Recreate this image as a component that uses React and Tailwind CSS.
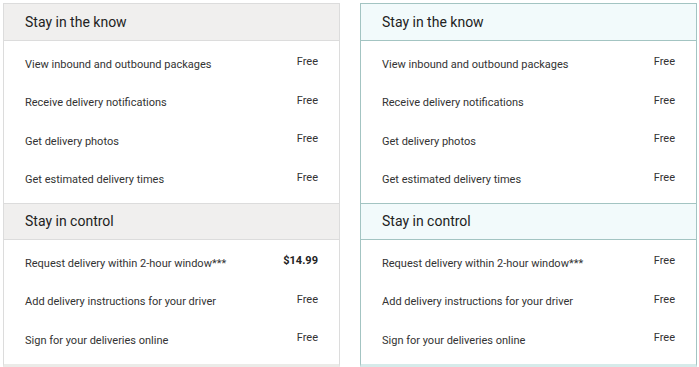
const sections = [
  {
    title: 'Stay in the know',
    rows: [
      ['View inbound and outbound packages', 'Free', 'Free'],
      ['Receive delivery notifications', 'Free', 'Free'],
      ['Get delivery photos', 'Free', 'Free'],
      ['Get estimated delivery times', 'Free', 'Free'],
    ],
  },
  {
    title: 'Stay in control',
    rows: [
      ['Request delivery within 2-hour window***', '$14.99', 'Free'],
      ['Add delivery instructions for your driver', 'Free', 'Free'],
      ['Sign for your deliveries online', 'Free', 'Free'],
    ],
  },
];

const Panel = ({ col, teal }) => {
  const border = teal ? 'border-[#a3c4c2]' : 'border-[#dcdcdc]';
  const head = teal ? 'bg-[#f2fafb]' : 'bg-[#f0efee]';
  return (
    <div className={`w-[337px] border-l border-r border-t ${border} ${teal ? 'border-b-[3px] border-b-[#d6ebea]' : 'border-b-[3px] border-b-[#ebebe8]'}`}>
      {sections.map((s, i) => (
        <div key={s.title}>
          <div className={`${head} ${i > 0 ? `border-t ${border}` : ''} border-b ${border} h-[37px] flex items-center pl-[21px] text-[14px] text-[#222]`}>
            {s.title}
          </div>
          <div className="py-[4px]">
            {s.rows.map((r) => (
              <div key={r[0]} className="h-[38.5px] flex items-center justify-between pl-[21px] pr-[21px] text-[11px] text-[#333]">
                <span className="pt-[1px]">{r[0]}</span>
                <span className={`-mt-[4px] ${r[col] !== 'Free' ? 'font-bold text-[#222]' : ''}`}>{r[col]}</span>
              </div>
            ))}
          </div>
        </div>
      ))}
    </div>
  );
};

export default function App() {
  return (
    <div className="w-[699px] h-[367px] overflow-hidden bg-white pt-[3px] pl-[3px] flex gap-[20px]" style={{ fontFamily: 'Roboto, "Liberation Sans", sans-serif' }}>
      <Panel col={1} />
      <Panel col={2} teal />
    </div>
  );
}
